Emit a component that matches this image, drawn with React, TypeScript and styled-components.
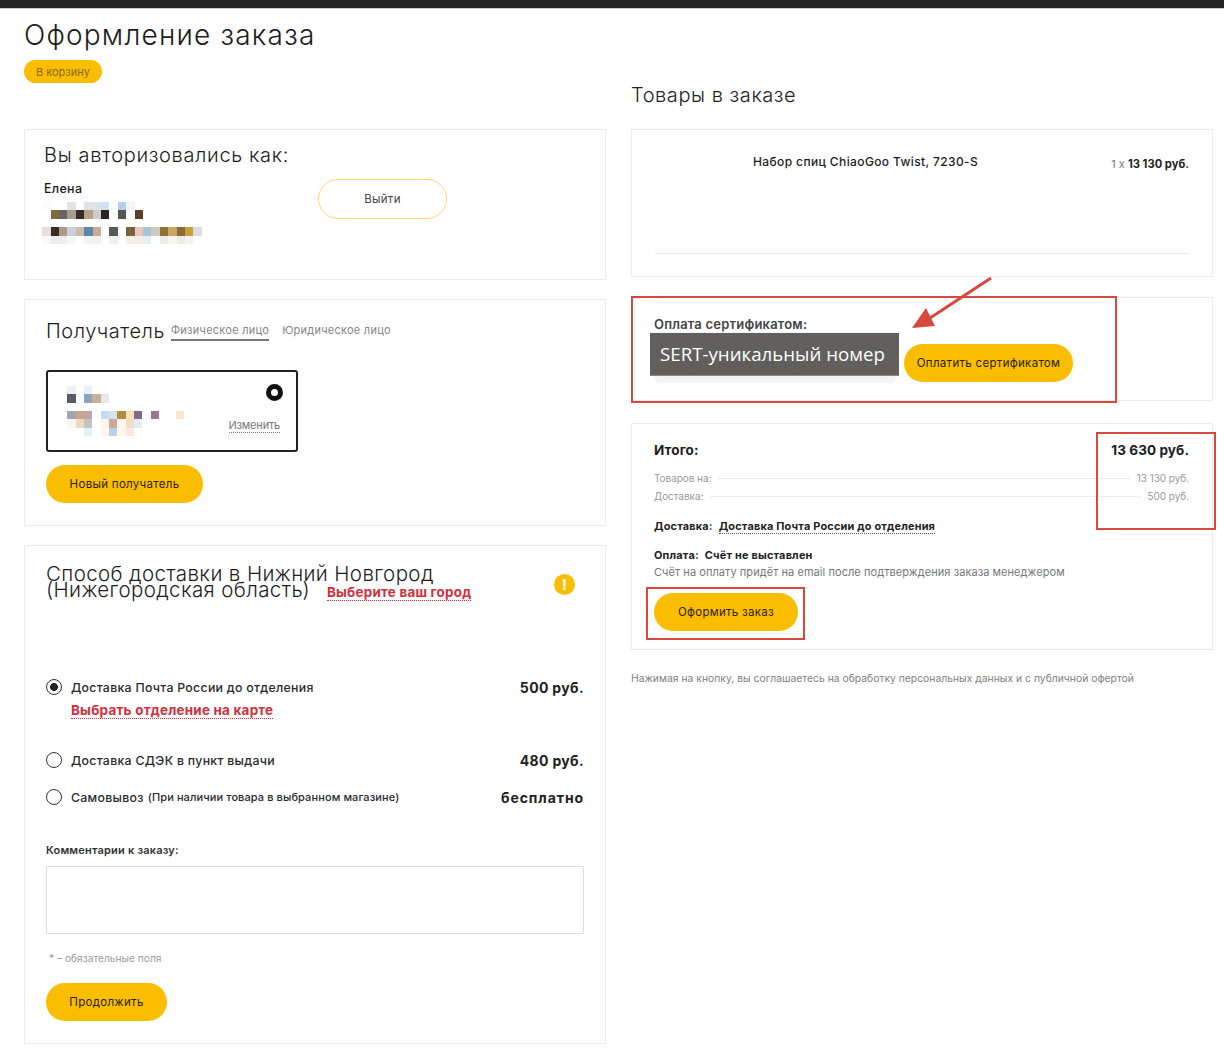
import React from "react";
import styled, { createGlobalStyle } from "styled-components";

const Global = createGlobalStyle`
  html, body { margin: 0; padding: 0; background: #fff; }
  body { font-family: Inter, "Noto Sans", "Liberation Sans", sans-serif; color: #1c1c1c; }
  * { box-sizing: border-box; }
`;

const Page = styled.div`
  position: relative;
  width: 1224px;
  height: 1058px;
  overflow: hidden;
`;
const TopBar = styled.div`
  height: 9px;
  background: #212121;
  border-bottom: 1px solid #c8c8c8;
`;
const Content = styled.div`
  padding: 0 11px 0 24px;
`;
const Title = styled.h1`
  margin: 10px 0 0;
  font-size: 28px;
  line-height: 33px;
  font-weight: 300;
  letter-spacing: 1.2px;
  color: #1d1d1d;
`;
const BackButton = styled.button`
  display: block;
  margin: 8px 0 0;
  width: 78px;
  height: 23px;
  border: 0;
  border-radius: 12px;
  background: #fabd00;
  color: #8c6a10;
  font: 400 11px Inter, sans-serif;
  padding: 0;
`;
const Columns = styled.div`
  display: grid;
  grid-template-columns: 582px 582px;
  column-gap: 25px;
`;
const Column = styled.div`
  display: flex;
  flex-direction: column;
  gap: ${(p: { $gap: number }) => p.$gap}px;
`;
const LeftColumn = styled(Column)`
  margin-top: 46px;
`;
const SectionTitle = styled.h2`
  margin: 0;
  height: 46px;
  font-size: 20px;
  line-height: 24px;
  font-weight: 300;
  letter-spacing: 0.55px;
  color: #222;
`;
const Card = styled.section<{ $h: number; $pl?: number; $pr?: number; $mt?: number }>`
  position: relative;
  height: ${(p) => p.$h}px;
  margin-top: ${(p) => p.$mt ?? 0}px;
  padding: 0 ${(p) => p.$pr ?? 22}px 0 ${(p) => p.$pl ?? 22}px;
  border: 1px solid #ececec;
  background: #fff;
`;
const AuthRow = styled.div`
  display: flex;
  align-items: flex-start;
`;
const AuthInfo = styled.div`
  width: 274px;
`;
const AuthHeading = styled.h2`
  margin: 13px 0 14px;
  font-size: 20px;
  line-height: 24px;
  font-weight: 300;
  letter-spacing: 0.65px;
  color: #1d1d1d;
`;
const AuthName = styled.div`
  font-size: 12.5px;
  line-height: 15px;
  font-weight: 500;
  letter-spacing: 0.3px;
`;
const Mosaic = styled.svg`
  display: block;
  flex: none;
`;
const AuthMosaic = styled(Mosaic)`
  margin: 6px 0 0 -2px;
`;
const LogoutButton = styled.button`
  width: 129px;
  height: 40px;
  margin-top: 49px;
  border: 1px solid #fbd67a;
  border-radius: 20px;
  background: #fff;
  color: #444;
  font: 400 11.5px Inter, sans-serif;
  letter-spacing: 0.3px;
`;
const RecipientHead = styled.div`
  display: flex;
  align-items: flex-start;
  padding-top: 19px;
`;
const RecipientTitle = styled.h2`
  margin: 0 6px 0 0;
  font-size: 20px;
  line-height: 24px;
  font-weight: 300;
  letter-spacing: 0.55px;
  color: #1d1d1d;
`;
const PersonTab = styled.span<{ $active?: boolean }>`
  display: block;
  height: 22px;
  margin-right: 13px;
  padding-top: 5px;
  font-size: 11px;
  line-height: 13px;
  letter-spacing: 0.25px;
  color: #858585;
  border-bottom: ${(p) => (p.$active ? "2px solid #777" : "0")};
`;
const RecipientBox = styled.div`
  position: relative;
  width: 252px;
  height: 82px;
  margin-top: 27px;
  padding: 14px 0 0 19px;
  border: 2px solid #222;
  border-radius: 3px;
`;
const BigRadio = styled.span`
  position: absolute;
  top: 12px;
  right: 13px;
  width: 17px;
  height: 17px;
  border: 5.5px solid #111;
  border-radius: 50%;
  background: #fff;
`;
const ChangeLink = styled.span`
  position: absolute;
  right: 16px;
  bottom: 17px;
  font-size: 11px;
  line-height: 13px;
  letter-spacing: -0.2px;
  color: #777;
  border-bottom: 1px dotted #777;
`;
const YellowButton = styled.button<{ $w: number }>`
  display: block;
  width: ${(p) => p.$w}px;
  height: 38px;
  border: 0;
  border-radius: 19px;
  background: #fabd00;
  color: #2b2410;
  font: 400 11.5px Inter, sans-serif;
  letter-spacing: 0.3px;
  padding: 0;
`;
const NewRecipient = styled(YellowButton)`
  margin-top: 13px;
`;
const DeliveryHead = styled.div`
  position: relative;
  padding-top: 20px;
  height: 125px;
`;
const DeliveryTitle = styled.h2`
  margin: 0;
  font-size: 20.5px;
  line-height: 16px;
  font-weight: 300;
  letter-spacing: 0.38px;
  color: #1d1d1d;
`;
const RedLink = styled.a`
  font-size: 13.4px;
  font-weight: 700;
  letter-spacing: 0.25px;
  color: #d22f3d;
  border-bottom: 1px dotted #d22f3d;
`;
const CityLink = styled(RedLink)`
  margin-left: 17px;
  line-height: 14px;
`;
const WarnIcon = styled.span`
  position: absolute;
  top: 28px;
  right: 9px;
  width: 21px;
  height: 21px;
  display: flex;
  align-items: center;
  justify-content: center;
  border-radius: 50%;
  background: #fabd00;
  color: #fff;
  font-size: 15px;
  line-height: 21px;
  font-weight: 800;
`;
const OptionRow = styled.div<{ $mt: number }>`
  display: flex;
  align-items: center;
  justify-content: space-between;
  height: 18px;
  margin-top: ${(p) => p.$mt}px;
`;
const OptionLabel = styled.label`
  display: flex;
  align-items: center;
  font-size: 12.3px;
  font-weight: 500;
  letter-spacing: 0.3px;
  color: #2a2a2a;
`;
const Radio = styled.span<{ $on?: boolean }>`
  flex: none;
  width: 16px;
  height: 16px;
  margin-right: 9px;
  border-radius: 50%;
  border: 1px solid #333;
  background: ${(p) => (p.$on ? "radial-gradient(circle, #222 0 3.6px, #fff 4.2px)" : "#fff")};
`;
const OptionHint = styled.small`
  margin-left: 4px;
  font-size: 11px;
  font-weight: 500;
  letter-spacing: 0.1px;
`;
const OptionPrice = styled.b`
  font-size: 14px;
  font-weight: 700;
  letter-spacing: 0.35px;
  color: #222;
`;
const FreePrice = styled(OptionPrice)`
  letter-spacing: 0.9px;
`;
const MapLink = styled(RedLink)`
  display: inline-block;
  margin: 7px 0 0 25px;
  line-height: 15px;
`;
const CommentLabel = styled.div`
  margin-top: 37px;
  font-size: 11px;
  line-height: 14px;
  font-weight: 600;
  letter-spacing: 0.2px;
  color: #333;
`;
const Comment = styled.div`
  width: 538px;
  height: 68px;
  margin-top: 9px;
  border: 1px solid #ddd;
`;
const Required = styled.div`
  margin: 18px 0 0 3px;
  font-size: 10.2px;
  line-height: 13px;
  color: #9a9a9a;
`;
const ContinueButton = styled(YellowButton)`
  margin-top: 18px;
`;
const ProductRow = styled.div`
  display: flex;
  justify-content: space-between;
  padding: 24px 0 0 98px;
  height: 124px;
  border-bottom: 1px solid #e8e8e8;
`;
const ProductName = styled.div`
  font-size: 12px;
  line-height: 15px;
  font-weight: 500;
  letter-spacing: 0.38px;
`;
const ProductPrice = styled.div`
  margin-top: 3px;
  font-size: 11px;
  line-height: 15px;
  color: #777;
  b {
    font-size: 11.2px;
    font-weight: 700;
    color: #222;
  }
`;
const CertTitle = styled.div`
  padding-top: 18px;
  font-size: 13px;
  line-height: 16px;
  font-weight: 600;
  letter-spacing: 0.2px;
  color: #444;
`;
const CertRow = styled.div`
  position: relative;
  display: flex;
  align-items: flex-start;
  gap: 8px;
`;
const CertInput = styled.div`
  width: 242px;
  height: 51px;
  padding: 25px 0 0 14px;
  border-radius: 0 0 6px 6px;
  background: #f4f4f4;
  font-size: 11.5px;
  color: #777;
`;
const CertOverlay = styled.div`
  position: absolute;
  top: 1px;
  left: -4px;
  width: 249px;
  height: 43px;
  padding-left: 10px;
  background: rgba(92, 91, 87, 0.97);
  border-bottom: 1px solid #8a8a86;
  color: #fff;
  font-family: "Open Sans", sans-serif;
  font-size: 18.7px;
  line-height: 41px;
  white-space: nowrap;
`;
const CertButton = styled(YellowButton)`
  margin-top: 12px;
`;
const TotalHead = styled.div`
  display: flex;
  justify-content: space-between;
  padding-top: 17px;
  font-size: 13.5px;
  line-height: 18px;
  font-weight: 700;
  letter-spacing: 0.1px;
  color: #1d1d1d;
`;
const LeaderRow = styled.div<{ $mt: number }>`
  display: flex;
  align-items: center;
  gap: 8px;
  height: 14px;
  margin-top: ${(p) => p.$mt}px;
  font-size: 10px;
  letter-spacing: -0.05px;
  color: #999;
  &::before {
    content: "";
    order: 1;
    flex: 1;
    border-top: 1px dotted #ddd;
  }
  span:last-child {
    order: 2;
  }
`;
const SummaryLine = styled.div<{ $mt: number }>`
  display: flex;
  gap: 6px;
  margin-top: ${(p) => p.$mt}px;
  font-size: 10.9px;
  line-height: 14px;
  font-weight: 700;
  letter-spacing: 0.2px;
  color: #222;
`;
const DottedValue = styled.span`
  border-bottom: 1px dotted #555;
`;
const PayNote = styled.div`
  margin-top: 3px;
  font-size: 11px;
  line-height: 14px;
  letter-spacing: 0.06px;
  color: #777;
`;
const OrderButton = styled(YellowButton)`
  margin-top: 14px;
`;
const Consent = styled.p`
  margin: 21px 0 0;
  font-size: 10.3px;
  line-height: 14px;
  letter-spacing: 0.03px;
  color: #808080;
`;
const RedBox = styled.div<{ $x: number; $y: number; $w: number; $h: number }>`
  position: absolute;
  left: ${(p) => p.$x}px;
  top: ${(p) => p.$y}px;
  width: ${(p) => p.$w}px;
  height: ${(p) => p.$h}px;
  border: 2px solid #d8483f;
  pointer-events: none;
`;
const ArrowLayer = styled.svg`
  position: absolute;
  left: 900px;
  top: 270px;
`;

type Cell = [number, number, string];

const PixelBlock = ({ as: Comp, w, h, cols, rows, cells }: { as: typeof Mosaic; w: number; h: number; cols: number; rows: number; cells: Cell[] }) => (
  <Comp width={w} height={h} viewBox={`0 0 ${cols} ${rows}`} shapeRendering="crispEdges">
    {cells.map(([c, r, f], i) => (
      <rect key={i} x={c} y={r} width="1" height="1" fill={f} />
    ))}
  </Comp>
);

const authCells: Cell[] = [
  [0, 0, "#fafbfb"], [3, 0, "#e3e3e3"], [5, 0, "#dfe3e6"], [6, 0, "#d9e3ea"], [7, 0, "#cfe2f0"], [9, 0, "#b5d0e8"], [10, 0, "#f2f6fa"],
  [1, 1, "#86683c"], [2, 1, "#666462"], [3, 1, "#a99b88"], [4, 1, "#38292a"], [5, 1, "#b5a08a"], [6, 1, "#cccccc"], [7, 1, "#2a2422"], [9, 1, "#555555"], [11, 1, "#5c4028"],
  [0, 3, "#ecdedb"], [1, 3, "#3a2a28"], [2, 3, "#b09a85"], [3, 3, "#c9d2d8"], [4, 3, "#c9bcae"], [5, 3, "#5b86ad"], [6, 3, "#c9ab98"], [8, 3, "#5a5a58"], [10, 3, "#7a6245"], [11, 3, "#e8c8b8"], [12, 3, "#a8c4dc"], [13, 3, "#cfc9c0"], [14, 3, "#94702e"], [15, 3, "#c9a865"], [16, 3, "#8a6d3c"], [17, 3, "#c9a040"], [18, 3, "#dddddd"],
  [0, 4, "#fbf8f8"], [1, 4, "#ececec"], [2, 4, "#eeeeee"], [3, 4, "#f7f7f7"], [5, 4, "#eef5fb"], [6, 4, "#f6f0ec"], [8, 4, "#f0f0f0"], [10, 4, "#f3f0ec"], [11, 4, "#f7efe9"], [12, 4, "#e6eef5"], [14, 4, "#ececec"], [15, 4, "#faf6ee"], [16, 4, "#ececec"], [17, 4, "#f8f4ea"],
];
const recipientCells: Cell[] = [
  [0, 0, "#f0f0f0"], [2, 0, "#e6f1f8"],
  [0, 1, "#555e66"], [2, 1, "#8fa3b8"], [3, 1, "#c9b09a"], [4, 1, "#e8e8e8"],
  [0, 3, "#a0a5b0"], [1, 3, "#c9a68c"], [2, 3, "#c0a5a8"], [4, 3, "#c5dcf0"], [5, 3, "#d5e3ee"], [6, 3, "#b08c3c"], [7, 3, "#f5e3c0"], [8, 3, "#85688c"], [10, 3, "#9a7490"], [13, 3, "#fce8c8"],
  [0, 4, "#fbf7f0"], [1, 4, "#eed8c0"], [2, 4, "#c4c4c0"], [4, 4, "#fdf5ee"], [5, 4, "#c8a898"], [6, 4, "#fdf5ee"], [7, 4, "#f0dccc"], [8, 4, "#e5ebef"],
  [0, 5, "#fdfdfd"], [2, 5, "#e5f1f8"], [4, 5, "#fdf5ee"], [5, 5, "#b8d0e8"], [6, 5, "#fdf5ee"], [7, 5, "#f8e8dd"],
];

export default function App() {
  return (
    <Page>
      <Global />
      <TopBar />
      <Content>
        <Title>Оформление заказа</Title>
        <BackButton>В корзину</BackButton>
        <Columns>
          <LeftColumn $gap={19}>
            <Card $h={151} $pl={19} $pr={19}>
              <AuthRow>
                <AuthInfo>
                  <AuthHeading>Вы авторизовались как:</AuthHeading>
                  <AuthName>Елена</AuthName>
                  <PixelBlock as={AuthMosaic} w={160} h={42} cols={19} rows={5} cells={authCells} />
                </AuthInfo>
                <LogoutButton>Выйти</LogoutButton>
              </AuthRow>
            </Card>
            <Card $h={227} $pl={21} $pr={21}>
              <RecipientHead>
                <RecipientTitle>Получатель</RecipientTitle>
                <PersonTab $active>Физическое лицо</PersonTab>
                <PersonTab>Юридическое лицо</PersonTab>
              </RecipientHead>
              <RecipientBox>
                <PixelBlock as={Mosaic} w={117} h={50} cols={14} rows={6} cells={recipientCells} />
                <BigRadio />
                <ChangeLink>Изменить</ChangeLink>
              </RecipientBox>
              <NewRecipient $w={157}>Новый получатель</NewRecipient>
            </Card>
            <Card $h={499} $pl={21} $pr={21}>
              <DeliveryHead>
                <DeliveryTitle>
                  Способ доставки в Нижний Новгород
                  <br />
                  (Нижегородская область)
                  <CityLink>Выберите ваш город</CityLink>
                </DeliveryTitle>
                <WarnIcon>!</WarnIcon>
              </DeliveryHead>
              <OptionRow $mt={7}>
                <OptionLabel><Radio $on />Доставка Почта России до отделения</OptionLabel>
                <OptionPrice>500 руб.</OptionPrice>
              </OptionRow>
              <MapLink>Выбрать отделение на карте</MapLink>
              <OptionRow $mt={32}>
                <OptionLabel><Radio />Доставка СДЭК в пункт выдачи</OptionLabel>
                <OptionPrice>480 руб.</OptionPrice>
              </OptionRow>
              <OptionRow $mt={19}>
                <OptionLabel><Radio />Самовывоз<OptionHint>(При наличии товара в выбранном магазине)</OptionHint></OptionLabel>
                <FreePrice>бесплатно</FreePrice>
              </OptionRow>
              <CommentLabel>Комментарии к заказу:</CommentLabel>
              <Comment />
              <Required>* – обязательные поля</Required>
              <ContinueButton $w={121}>Продолжить</ContinueButton>
            </Card>
          </LeftColumn>
          <Column $gap={0}>
            <SectionTitle>Товары в заказе</SectionTitle>
            <Card $h={148} $pl={23} $pr={23}>
              <ProductRow>
                <ProductName>Набор спиц ChiaoGoo Twist, 7230-S</ProductName>
                <ProductPrice>1 x <b>13 130 руб.</b></ProductPrice>
              </ProductRow>
            </Card>
            <Card $h={104} $pr={23} $mt={20}>
              <CertTitle>Оплата сертификатом:</CertTitle>
              <CertRow>
                <CertInput>Введите номер сертификата</CertInput>
                <CertOverlay>SERT-уникальный номер</CertOverlay>
                <CertButton $w={169}>Оплатить сертификатом</CertButton>
              </CertRow>
            </Card>
            <Card $h={227} $pr={23} $mt={22}>
              <TotalHead><span>Итого:</span><span>13 630 руб.</span></TotalHead>
              <LeaderRow $mt={12}><span>Товаров на:</span><span>13 130 руб.</span></LeaderRow>
              <LeaderRow $mt={4}><span>Доставка:</span><span>500 руб.</span></LeaderRow>
              <SummaryLine $mt={16}><span>Доставка:</span><DottedValue>Доставка Почта России до отделения</DottedValue></SummaryLine>
              <SummaryLine $mt={14}><span>Оплата:</span><span>Счёт не выставлен</span></SummaryLine>
              <PayNote>Счёт на оплату придёт на email после подтверждения заказа менеджером</PayNote>
              <OrderButton $w={144}>Оформить заказ</OrderButton>
            </Card>
            <Consent>Нажимая на кнопку, вы соглашаетесь на обработку персональных данных и с публичной офертой</Consent>
          </Column>
        </Columns>
      </Content>
      <RedBox $x={631} $y={296} $w={486} $h={107} />
      <RedBox $x={1096} $y={432} $w={120} $h={98} />
      <RedBox $x={646} $y={587} $w={159} $h={53} />
      <ArrowLayer width="100" height="70" viewBox="0 0 100 70">
        <path d="M91 8 L30 48" stroke="#d8483f" strokeWidth="3" fill="none" />
        <path d="M12 58 L26 38 L35 56 Z" fill="#d8483f" />
      </ArrowLayer>
    </Page>
  );
}
